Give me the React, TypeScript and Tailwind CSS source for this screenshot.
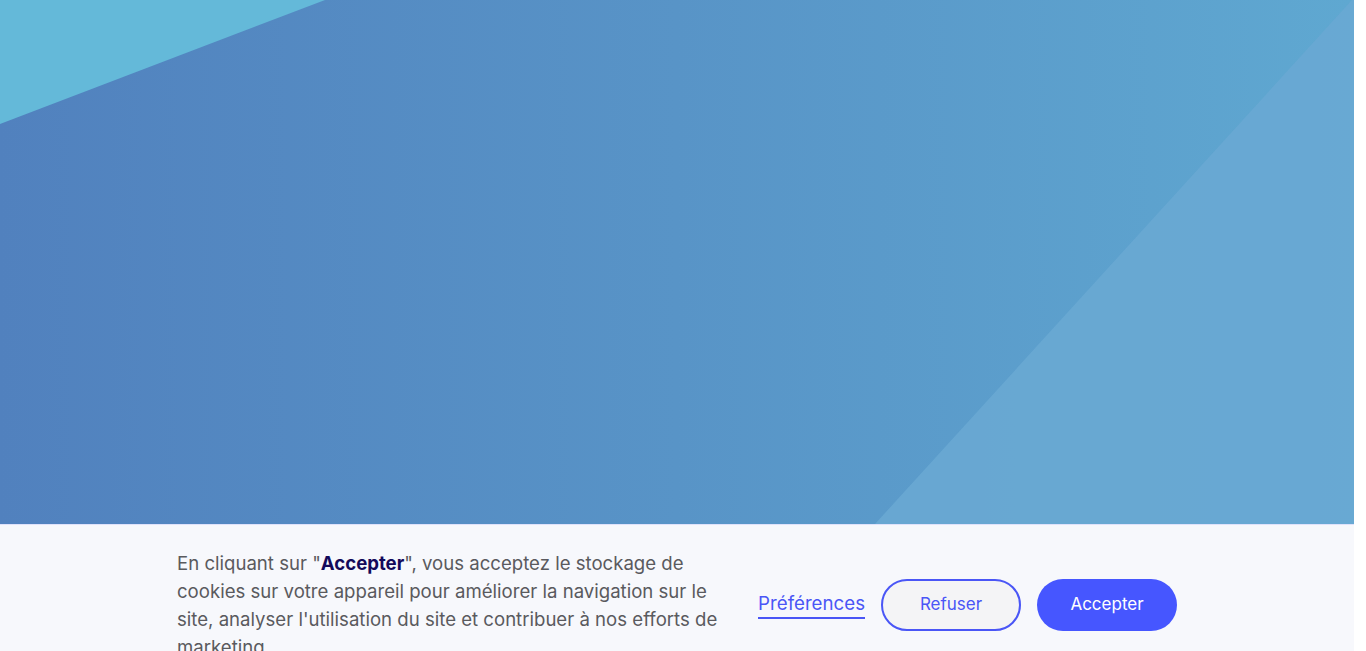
export default function App() {
  return (
    <div className="flex h-[651px] w-full overflow-hidden bg-white" style={{ fontFamily: 'Inter, "Open Sans", sans-serif' }}>
      <div className="flex w-[1354px] shrink-0 flex-col">
        {/* Hero */}
        <div className="relative h-[524px] w-full shrink-0 overflow-hidden bg-gradient-to-r from-[#5181be] via-[#5894c7] to-[#5fa8d1]">
          <svg className="absolute inset-0 h-full w-full" viewBox="0 0 1354 524" preserveAspectRatio="none">
            <polygon points="0,0 325,0 0,124" fill="#64b9d9" />
            <polygon points="1352,0 1354,0 1354,524 875,524" fill="#69a9d3" fillOpacity="0.9" />
          </svg>
        </div>

        {/* Cookie banner */}
        <div className="flex-1 border-t border-[#dfe2fb] bg-[#f7f8fc]">
          <div className="mx-auto flex w-[1000px] items-center pt-6">
            <p className="w-[555px] text-[18.6px] leading-[28px] text-[#5a5a5e]">
              En cliquant sur "<strong className="font-bold text-[#13095a]">Accepter</strong>", vous acceptez le stockage de cookies sur votre appareil pour améliorer la navigation sur le site, analyser l'utilisation du site et contribuer à nos efforts de marketing.
            </p>
            <div className="ml-auto flex items-center gap-4">
              <a className="border-b-2 border-[#4a56f6] pb-px text-[18.7px] leading-[24px] text-[#4a56f6]" href="#">Préférences</a>
              <button className="flex h-[52px] w-[140px] items-center justify-center rounded-full border-2 border-[#4a56f6] bg-[#f4f4f6] text-[17px] text-[#4a56f6]">Refuser</button>
              <button className="flex h-[52px] w-[140px] items-center justify-center rounded-full bg-[#4656ff] text-[17px] text-white">Accepter</button>
            </div>
          </div>
        </div>
      </div>
      <div className="flex-1 bg-white" />
    </div>
  );
}
